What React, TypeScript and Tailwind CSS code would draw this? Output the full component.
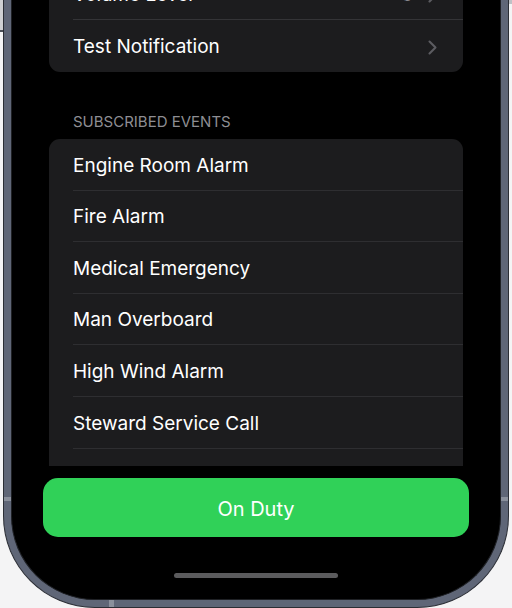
import React from 'react';

const font = { fontFamily: 'Inter, "Noto Sans", sans-serif' };

const Chevron = () => (
  <svg width="9" height="15" viewBox="0 0 9 15" fill="none" className="shrink-0">
    <path d="M1.5 1.5L7.5 7.5L1.5 13.5" stroke="#5c5c61" strokeWidth="2.1" strokeLinecap="round" strokeLinejoin="round" />
  </svg>
);

const events = [
  'Engine Room Alarm',
  'Fire Alarm',
  'Medical Emergency',
  'Man Overboard',
  'High Wind Alarm',
  'Steward Service Call',
];

export default function App() {
  return (
    <div className="relative h-[608px] overflow-hidden bg-[#f4f4f5]" style={font}>
      {/* side buttons */}
      <div className="absolute left-0 top-0 h-[32px] w-[4px] bg-[#cfd0d3] border-b-2 border-[#4b4f57]" />
      <div className="absolute right-0 top-0 h-[4px] w-[4px] bg-[#bfc1c6]" />

      {/* phone frame */}
      <div className="relative mx-[3px] h-[608px] rounded-b-[92px] border-x border-b border-[#2b2e35] bg-[#5f6677] px-[7px] pb-[7px]">
        {/* antenna bands */}
        <div className="absolute left-0 top-[497px] h-[4px] w-[8px] bg-[#8a909c]" />
        <div className="absolute right-0 top-[497px] h-[4px] w-[8px] bg-[#8a909c]" />
        <div className="absolute bottom-0 left-[105px] h-[8px] w-[5px] bg-[#8a909c]" />

        <div className="relative flex h-full flex-col overflow-hidden rounded-b-[84px] border-x border-b border-[#1f2125] bg-black">
          <div className="h-[466px] overflow-hidden px-[37px]">
            <div className="-mt-[32px] overflow-hidden rounded-[11px] bg-[#1c1c1e]">
              <div className="ml-6 flex h-[52px] items-center border-b border-[#343437] pr-[26px] pt-[3px]">
                <span className="flex-1 text-[19px] text-white">Volume Level</span>
                <span className="mr-[15px] text-[19px] text-[#8d8d93]">3</span>
                <Chevron />
              </div>
              <div className="ml-6 flex h-[52px] items-center pr-[26px] pt-[3px]">
                <span className="flex-1 text-[19px] text-white">Test Notification</span>
                <Chevron />
              </div>
            </div>

            <div className="mt-[40px] mb-[7px] pl-6 text-[15px] leading-[20px] text-[#8e8e93]">
              SUBSCRIBED EVENTS
            </div>

            <div className="rounded-t-[11px] bg-[#1c1c1e]">
              {events.map((e) => (
                <div key={e} className="ml-6 flex h-[51.6px] items-center border-b border-[#2e2e31] pt-[3px]">
                  <span className="text-[19px] text-white">{e}</span>
                </div>
              ))}
              <div className="h-[52px]" />
            </div>
          </div>

          <button className="mx-[31px] mt-[12px] flex h-[59px] items-center justify-center rounded-[15px] bg-[#30d158] pt-[2px] text-[20px] text-white">
            On Duty
          </button>

          <div className="mx-auto mt-[36px] h-[5px] w-[164px] rounded-full bg-[#5b5b5d]" />
        </div>
      </div>
    </div>
  );
}
